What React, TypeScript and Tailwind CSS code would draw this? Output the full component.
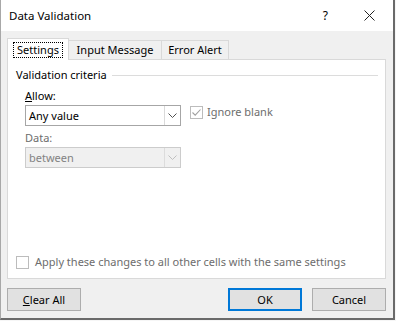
import React from 'react';

function Check({ checked, className }: { checked?: boolean; className?: string }) {
  return (
    <div className={`w-[13px] h-[13px] border border-[#bcbcbc] bg-white flex items-center justify-center ${className ?? ''}`}>
      {checked && (
        <svg width="11" height="11" viewBox="0 0 11 11">
          <path d="M1.5 5.5 L4.2 8.2 L9.5 2.5" fill="none" stroke="#a0a0a0" strokeWidth="1.1" />
        </svg>
      )}
    </div>
  );
}

function Chevron({ color }: { color: string }) {
  return (
    <svg width="9" height="5" viewBox="0 0 9 5">
      <path d="M0.5 0.5 L4.5 4.5 L8.5 0.5" fill="none" stroke={color} strokeWidth="1" />
    </svg>
  );
}

function Combo({ value, disabled }: { value: string; disabled?: boolean }) {
  return (
    <div
      className={`w-[156px] h-[21px] flex border ${
        disabled ? 'border-[#cccccc] bg-[#f0f0f0] text-[#838383]' : 'border-[#a6a6a6] bg-white text-black'
      }`}
    >
      <div className="flex-1 pl-[3px] flex items-center">{value}</div>
      <div
        className={`w-[16px] flex items-center justify-center border-l ${
          disabled ? 'border-[#dcdcdc]' : 'border-[#dadada]'
        }`}
      >
        <Chevron color={disabled ? '#bfbfbf' : '#505050'} />
      </div>
    </div>
  );
}

function Button({ children, primary, className }: { children: React.ReactNode; primary?: boolean; className?: string }) {
  return (
    <div
      className={`h-[23px] w-[74px] flex items-center justify-center bg-[#e1e1e1] ${
        primary ? 'border-2 border-[#0078d7]' : 'border border-[#adadad]'
      } ${className ?? ''}`}
    >
      {children}
    </div>
  );
}

export default function App() {
  return (
    <div
      className="w-[396px] h-[321px] bg-[#f6f6f6] text-[11px] leading-[16px] text-black"
      style={{ fontFamily: '"Noto Sans", "Open Sans", sans-serif' }}
    >
      <div className="w-[395px] h-[320px] flex flex-col bg-[#f0f0f0] border-l border-[#a8a8a8] border-r-2 border-b-2 border-r-[#6a6a6a] border-b-[#6a6a6a]">
        {/* Title bar */}
        <div className="h-[31px] bg-white flex items-center pl-[8px] pr-[18px]">
          <span className="flex-1 text-[11.5px]">Data Validation</span>
          <span className="text-[12px] mr-[36px]">?</span>
          <svg width="11" height="11" viewBox="0 0 11 11">
            <path d="M0.5 0.5 L10.5 10.5 M10.5 0.5 L0.5 10.5" stroke="#222" strokeWidth="1" />
          </svg>
        </div>

        {/* Tabs */}
        <div className="pl-[6px] pt-[7px] flex items-end">
          <div className="w-[62px] h-[22px] bg-white border border-b-0 border-[#d9d9d9] flex items-center justify-center -mb-px relative z-10">
            <span className="px-[3px] border border-dotted border-black leading-[14px]">Settings</span>
          </div>
          <div className="w-[93px] h-[19px] border border-l-0 border-b-0 border-[#d9d9d9] flex items-center justify-center">
            Input Message
          </div>
          <div className="w-[67px] h-[19px] border border-l-0 border-b-0 border-[#d9d9d9] flex items-center justify-center">
            Error Alert
          </div>
        </div>

        {/* Panel */}
        <div className="ml-[6px] w-[379px] h-[220px] bg-white border border-[#d9d9d9] flex flex-col pl-[8px] pr-[7px]">
          <div className="mt-[7px] flex items-center">
            <span>Validation criteria</span>
            <div className="flex-1 ml-[5px] h-px bg-[#dcdcdc]" />
          </div>

          <div className="mt-[5px] pl-[9px] flex">
            <div className="flex flex-col">
              <span>
                <span className="underline">A</span>llow:
              </span>
              <div className="mt-[1px]">
                <Combo value="Any value" />
              </div>
              <span className="mt-[4px] text-[#6d6d6d]">Data:</span>
              <div className="mt-[1px]">
                <Combo value="between" disabled />
              </div>
            </div>
            <div className="ml-[9px] mt-[18px] flex items-start">
              <Check checked />
              <span className="ml-[4px] -mt-[2px] text-[#6d6d6d]">Ignore blank</span>
            </div>
          </div>

          <div className="mt-auto mb-[8px] flex items-center">
            <Check />
            <span className="ml-[6px] text-[#6d6d6d]">Apply these changes to all other cells with the same settings</span>
          </div>
        </div>

        {/* Buttons */}
        <div className="mt-[9px] pl-[6px] flex">
          <Button>
            <span>
              <span className="underline">C</span>lear All
            </span>
          </Button>
          <div className="flex-1" />
          <Button primary>OK</Button>
          <Button className="ml-[10px] mr-[7px]">Cancel</Button>
        </div>
      </div>
    </div>
  );
}
